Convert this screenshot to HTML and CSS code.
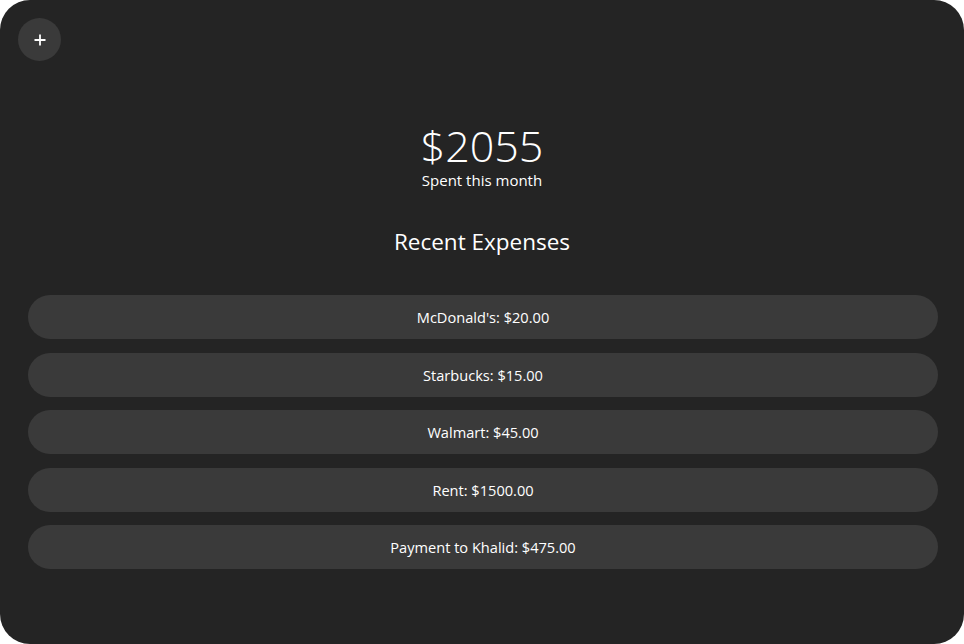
FILE: index.html
```html
<!DOCTYPE html>
<html>
<head>
<meta charset="utf-8">
<link rel="stylesheet" href="styles.css">
</head>
<body>
<div class="app">
  <div class="topbar">
    <button class="add-btn" aria-label="Add expense">
      <svg width="12" height="12" viewBox="0 0 12 12"><path d="M6 0.5V11.5M0.5 6H11.5" stroke="#fff" stroke-width="1.8"/></svg>
    </button>
  </div>
  <div class="summary">
    <div class="total">$2055</div>
    <div class="total-label">Spent this month</div>
  </div>
  <h2 class="section-title">Recent Expenses</h2>
  <ul class="expenses">
    <li class="expense">McDonald's: $20.00</li>
    <li class="expense">Starbucks: $15.00</li>
    <li class="expense">Walmart: $45.00</li>
    <li class="expense">Rent: $1500.00</li>
    <li class="expense">Payment to Khalid: $475.00</li>
  </ul>
</div>
</body>
</html>
```

FILE: styles.css
```css
html, body {
  margin: 0;
  padding: 0;
  background: #ffffff;
}
.app {
  width: 964px;
  height: 644px;
  box-sizing: border-box;
  background: #242424;
  border-radius: 30px;
  overflow: hidden;
  color: #ffffff;
  font-family: "Open Sans", "DejaVu Sans", sans-serif;
  display: flex;
  flex-direction: column;
}
.topbar {
  padding: 18px 0 0 18px;
  height: 43px;
}
.add-btn {
  width: 43px;
  height: 43px;
  border-radius: 50%;
  border: none;
  background: #3a3a3a;
  padding: 0;
  display: flex;
  align-items: center;
  justify-content: center;
}
.summary {
  display: flex;
  flex-direction: column;
  align-items: center;
  margin-top: 63px;
}
.total {
  font-size: 43px;
  font-weight: 300;
  line-height: 44px;
}
.total-label {
  font-size: 15px;
  line-height: 20px;
  margin-top: 2px;
}
.section-title {
  margin: 38px 0 0;
  text-align: center;
  font-size: 22.5px;
  font-weight: 400;
  line-height: 28px;
}
.expenses {
  list-style: none;
  margin: 39px 0 0;
  padding: 0 26px 0 28px;
  display: flex;
  flex-direction: column;
  gap: 13.5px;
}
.expense {
  height: 44px;
  border-radius: 22px;
  background: #3a3a3a;
  display: flex;
  align-items: center;
  justify-content: center;
  font-size: 14.6px;
}
```
